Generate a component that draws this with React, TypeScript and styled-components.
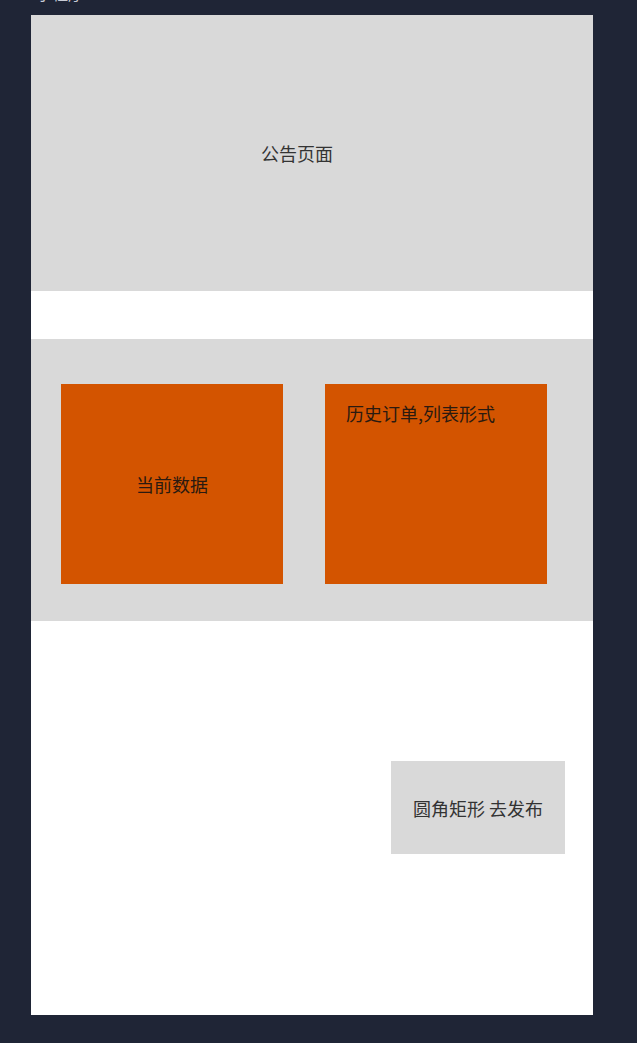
import React from "react";
import styled, { createGlobalStyle } from "styled-components";

const Global = createGlobalStyle`
  html, body { margin: 0; padding: 0; background: #1f2536; }
  body { font-family: "Noto Sans CJK SC", "Noto Sans", sans-serif; }
`;

const Page = styled.div`
  width: 637px;
  height: 1043px;
  background: #1f2536;
  overflow: hidden;
  display: flex;
  flex-direction: column;
  align-items: flex-start;
`;

const Caption = styled.div`
  padding-left: 36px;
  overflow: hidden;
  color: #c8ccd6;
  font-size: 16px;
  line-height: 20px;
  margin-top: -3px;
  height: 18px;
  & > span { display: block; margin-top: -14px; }
`;

const Frame = styled.div`
  margin-left: 31px;
  width: 562px;
  height: 1000px;
  background: #ffffff;
  display: flex;
  flex-direction: column;
`;

const Notice = styled.div`
  height: 276px;
  background: #d9d9d9;
  display: flex;
  align-items: center;
  justify-content: center;
  font-size: 18px;
  color: #333;
  padding-right: 30px;
  box-sizing: border-box;
`;

const Section = styled.div`
  margin-top: 48px;
  height: 282px;
  background: #d9d9d9;
  display: flex;
  gap: 42px;
  padding: 45px 0 0 30px;
  box-sizing: border-box;
`;

const Card = styled.div<{ $top?: boolean }>`
  width: 222px;
  height: 200px;
  background: #d35400;
  color: #2a1a10;
  font-size: 18px;
  box-sizing: border-box;
  display: flex;
  ${(p) =>
    p.$top
      ? `align-items: flex-start; justify-content: flex-start; padding: 16px 0 0 21px;`
      : `align-items: center; justify-content: center;`}
`;

const Bottom = styled.div`
  flex: 1;
  display: flex;
  justify-content: flex-end;
  padding: 140px 28px 0 0;
`;

const Publish = styled.div`
  width: 174px;
  height: 93px;
  background: #d9d9d9;
  color: #333;
  font-size: 18px;
  display: flex;
  align-items: center;
  justify-content: center;
  white-space: pre;
`;

export default function App() {
  return (
    <Page>
      <Global />
      <Caption>
        <span>小程序</span>
      </Caption>
      <Frame>
        <Notice>公告页面</Notice>
        <Section>
          <Card>当前数据</Card>
          <Card $top>历史订单,列表形式</Card>
        </Section>
        <Bottom>
          <Publish>圆角矩形 去发布</Publish>
        </Bottom>
      </Frame>
    </Page>
  );
}
